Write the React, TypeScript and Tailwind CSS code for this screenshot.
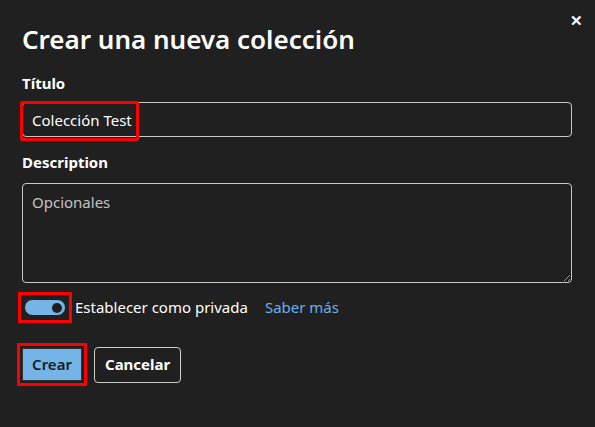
import React from 'react';

const font = { fontFamily: '"Noto Sans", "Open Sans", sans-serif' };

export default function App() {
  return (
    <div
      className="relative w-[595px] h-[427px] bg-[#202020] text-white pl-[22px] pr-[23px] pt-[22px]"
      style={font}
    >
      {/* close */}
      <button className="absolute right-[12px] top-[13px] text-white text-[15px] font-bold leading-none">
        ✕
      </button>

      <h1 className="text-[26px] leading-[34px] font-semibold">
        Crear una nueva colección
      </h1>

      <label className="block mt-[17px] text-[15px] leading-[20px] font-bold">Título</label>
      <div className="relative mt-[9px]">
        <input
          className="w-full h-[35px] rounded-[4px] border border-[#c8c8c8] bg-transparent px-[9px] text-[15px] text-white outline-none"
          defaultValue="Colección Test"
          style={font}
        />
        {/* highlight */}
        <div className="absolute left-[-2px] top-[-1px] w-[119px] h-[40px] border-[3px] border-[#ff0000] rounded-[2px] pointer-events-none" />
      </div>

      <label className="block mt-[15px] text-[15px] leading-[20px] font-bold">Description</label>
      <textarea
        className="mt-[11px] block w-full h-[100px] rounded-[4px] border border-[#c8c8c8] bg-transparent px-[9px] py-[7px] text-[15px] text-white placeholder:text-[#c4c4c4] outline-none"
        placeholder="Opcionales"
        style={font}
      />

      <div className="mt-[9px] flex items-center">
        <div className="ml-[-4px] border-[3px] border-[#ff0000] px-[3px] py-[4px]">
          <div className="w-[42px] h-[17px] rounded-full bg-[#75b4e6] border border-[#1a1a1a] flex items-center justify-end pr-[3px]">
            <div className="w-[10px] h-[10px] rounded-full bg-[#202020]" />
          </div>
        </div>
        <span className="ml-[3px] text-[15px]">Establecer como privada</span>
        <a className="ml-[17px] text-[15px] text-[#6cb2ea]">Saber más</a>
      </div>

      <div className="mt-[20px] flex items-center">
        <div className="ml-[-5px] border-[3px] border-[#ff0000] p-[2px]">
          <button className="h-[33px] w-[60px] bg-[#75b4e6] text-[#1b1b1b] text-[15px] font-semibold border border-[#303030]" style={font}>
            Crear
          </button>
        </div>
        <button className="ml-[7px] h-[36px] px-[10px] rounded-[4px] border border-[#cfcfcf] text-[15px] font-bold text-white" style={font}>
          Cancelar
        </button>
      </div>
    </div>
  );
}
